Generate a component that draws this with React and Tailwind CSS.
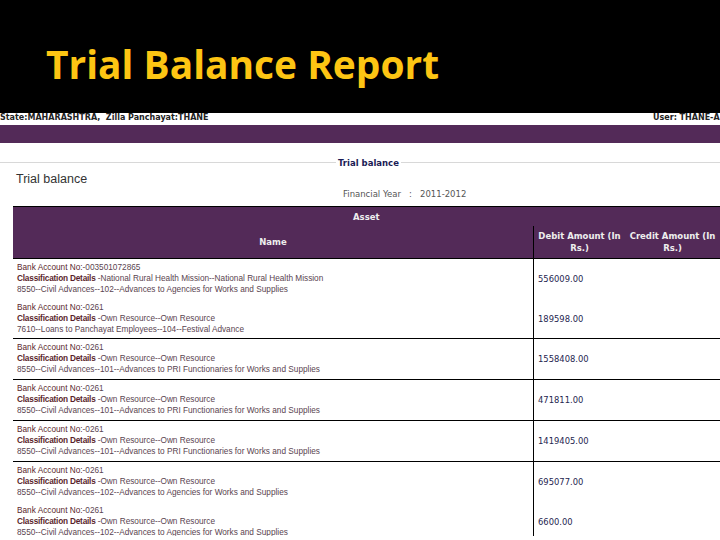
const rows = [
  { group: [
    { acct: "Bank Account No:-003501072865", cls: "-National Rural Health Mission--National Rural Health Mission", head: "8550--Civil Advances--102--Advances to Agencies for Works and Supplies", amount: "556009.00" },
    { acct: "Bank Account No:-0261", cls: "-Own Resource--Own Resource", head: "7610--Loans to Panchayat Employees--104--Festival Advance", amount: "189598.00", short: true },
  ] },
  { group: [{ acct: "Bank Account No:-0261", cls: "-Own Resource--Own Resource", head: "8550--Civil Advances--101--Advances to PRI Functionaries for Works and Supplies", amount: "1558408.00" }] },
  { group: [{ acct: "Bank Account No:-0261", cls: "-Own Resource--Own Resource", head: "8550--Civil Advances--101--Advances to PRI Functionaries for Works and Supplies", amount: "471811.00" }] },
  { group: [{ acct: "Bank Account No:-0261", cls: "-Own Resource--Own Resource", head: "8550--Civil Advances--101--Advances to PRI Functionaries for Works and Supplies", amount: "1419405.00" }] },
  { group: [
    { acct: "Bank Account No:-0261", cls: "-Own Resource--Own Resource", head: "8550--Civil Advances--102--Advances to Agencies for Works and Supplies", amount: "695077.00" },
    { acct: "Bank Account No:-0261", cls: "-Own Resource--Own Resource", head: "8550--Civil Advances--102--Advances to Agencies for Works and Supplies", amount: "6600.00" },
  ] },
];

const Entry = ({ item }) => (
  <div className={`flex ${item.short ? "h-[39px]" : "h-[40px]"}`}>
    <div className="w-[520px] pl-[4px] pt-[3px] font-['Liberation_Sans',sans-serif] text-[8.25px] leading-[11px] text-[#5a4450] whitespace-nowrap">
      <div><span className="text-[#5a1f2c]">{item.acct.split(":")[0]}:</span>{item.acct.split(":")[1]}</div>
      <div><span className="font-bold tracking-[-0.2px] text-[#5a1f2c]">Classification Details </span>{item.cls}</div>
      <div>{item.head}</div>
    </div>
    <div className="flex-1 border-l border-black pl-[4px] pt-[15px] font-['DejaVu_Sans',sans-serif] text-[8.4px] leading-[11px] text-[#25254f]">
      {item.amount}
    </div>
  </div>
);

export default function App() {
  return (
    <div className="w-[720px] h-[540px] overflow-hidden bg-white">
      <header className="h-[113px] bg-black pl-[46px] pt-[38px]">
        <h1 className="font-['Open_Sans',sans-serif] font-bold text-[38.9px] leading-[52px] text-[#fdc513] whitespace-nowrap">Trial Balance Report</h1>
      </header>

      <div className="flex justify-between h-[12px] font-['DejaVu_Sans',sans-serif] text-[8px] leading-[9px] font-semibold text-[#222] whitespace-pre">
        <span>State:MAHARASHTRA,  Zilla Panchayat:THANE</span>
        <span className="w-[67px]">User: THANE-A</span>
      </div>
      <div className="h-[18px] bg-[#532a58]" />

      <div className="relative h-[63px]">
        <div className="absolute left-0 right-0 top-[19px] border-t border-[#d8d8d8]" />
        <span className="absolute left-[336px] top-[14px] bg-white px-[2px] font-['DejaVu_Sans',sans-serif] text-[8.5px] font-semibold leading-[12px] text-[#1b1b55]">Trial balance</span>
        <span className="absolute left-[16px] top-[28px] font-['Liberation_Sans',sans-serif] text-[12.5px] leading-[16px] text-[#333]">Trial balance</span>
        <span className="absolute left-[343px] top-[45px] font-['DejaVu_Sans',sans-serif] text-[8.5px] leading-[12px] text-[#555] whitespace-pre">Financial Year   :   2011-2012</span>
      </div>

      <div className="ml-[13px] h-[330px] overflow-hidden border-t border-black">
        <div className="bg-[#532a58] font-['DejaVu_Sans',sans-serif] text-[8.5px] font-semibold leading-[12px] text-[#eee] border-b border-black">
          <div className="h-[19px] pt-[4px] pl-[340px]">Asset</div>
          <div className="flex h-[32px]">
            <div className="w-[520px] pt-[10px] text-center">Name</div>
            <div className="flex-1 flex border-l border-black pt-[4px] text-center">
              <div className="w-[91px]">Debit Amount (In Rs.)</div>
              <div className="flex-1">Credit Amount (In Rs.)</div>
            </div>
          </div>
        </div>
        {rows.map((row, i) => (
          <div key={i} className={i < rows.length - 1 ? "border-b border-black" : ""}>
            {row.group.map((item, j) => <Entry key={j} item={item} />)}
          </div>
        ))}
      </div>
    </div>
  );
}
